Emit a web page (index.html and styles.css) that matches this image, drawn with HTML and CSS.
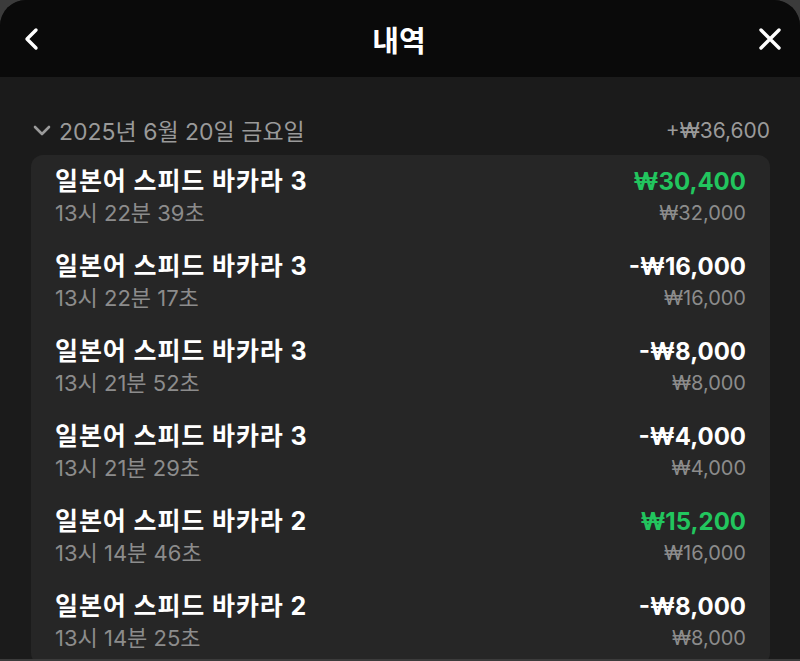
FILE: index.html
```
<!DOCTYPE html>
<html lang="ko">
<head>
    <meta charset="UTF-8">
    <meta name="viewport" content="width=device-width, initial-scale=1.0">
    <title>내역</title>
    <link rel="stylesheet" href="styles.css">
</head>
<body>
    <div class="sheet">
        <div class="topbar">
            <button class="icon-btn" aria-label="back">
                <svg width="20" height="26" viewBox="0 0 20 26"><path d="M15 4 L6 13 L15 22" fill="none" stroke="#fff" stroke-width="3.4" stroke-linecap="round" stroke-linejoin="round"/></svg>
            </button>
            <h1>내역</h1>
            <button class="icon-btn" aria-label="close">
                <svg width="26" height="26" viewBox="0 0 26 26"><path d="M4 4 L22 22 M22 4 L4 22" fill="none" stroke="#fff" stroke-width="3.4" stroke-linecap="round"/></svg>
            </button>
        </div>

        <div class="history">
            <div class="day-head">
                <div class="day-label">
                    <svg width="18" height="12" viewBox="0 0 18 12"><path d="M2 3 L9 10 L16 3" fill="none" stroke="#9a9a9a" stroke-width="2.6" stroke-linecap="round" stroke-linejoin="round"/></svg>
                    <span>2025년 6월 20일 금요일</span>
                </div>
                <span class="day-total">+₩36,600</span>
            </div>

            <div class="card" id="list">
                <div class="row">
                    <div class="info">
                        <div class="game">일본어 스피드 바카라 3</div>
                        <div class="time">13시 22분 39초</div>
                    </div>
                    <div class="amounts">
                        <div class="result win">₩30,400</div>
                        <div class="stake">₩32,000</div>
                    </div>
                </div>
                <div class="row">
                    <div class="info">
                        <div class="game">일본어 스피드 바카라 3</div>
                        <div class="time">13시 22분 17초</div>
                    </div>
                    <div class="amounts">
                        <div class="result">-₩16,000</div>
                        <div class="stake">₩16,000</div>
                    </div>
                </div>
                <div class="row">
                    <div class="info">
                        <div class="game">일본어 스피드 바카라 3</div>
                        <div class="time">13시 21분 52초</div>
                    </div>
                    <div class="amounts">
                        <div class="result">-₩8,000</div>
                        <div class="stake">₩8,000</div>
                    </div>
                </div>
                <div class="row">
                    <div class="info">
                        <div class="game">일본어 스피드 바카라 3</div>
                        <div class="time">13시 21분 29초</div>
                    </div>
                    <div class="amounts">
                        <div class="result">-₩4,000</div>
                        <div class="stake">₩4,000</div>
                    </div>
                </div>
                <div class="row">
                    <div class="info">
                        <div class="game">일본어 스피드 바카라 2</div>
                        <div class="time">13시 14분 46초</div>
                    </div>
                    <div class="amounts">
                        <div class="result win">₩15,200</div>
                        <div class="stake">₩16,000</div>
                    </div>
                </div>
                <div class="row">
                    <div class="info">
                        <div class="game">일본어 스피드 바카라 2</div>
                        <div class="time">13시 14분 25초</div>
                    </div>
                    <div class="amounts">
                        <div class="result">-₩8,000</div>
                        <div class="stake">₩8,000</div>
                    </div>
                </div>
            </div>
        </div>
    </div>
</body>
</html>
```
FILE: styles.css
```
body {
    margin: 0;
    height: 661px;
    overflow: hidden;
    background-color: #3b3b3b;
    font-family: Inter, "Noto Sans CJK KR", sans-serif;
    color: #fff;
}
.sheet {
    height: 659px;
    background-color: #1b1b1b;
    border-radius: 26px 26px 0 0;
    overflow: hidden;
}
.topbar {
    height: 77px;
    background-color: #0a0a0a;
    display: flex;
    justify-content: space-between;
    align-items: center;
    padding: 0 17px 0 21px;
}
.topbar h1 {
    margin: 0;
    font-size: 29px;
    font-weight: 700;
    font-family: "Noto Sans CJK KR", sans-serif;
}
.icon-btn {
    background: none;
    border: none;
    padding: 0;
    display: flex;
    cursor: pointer;
}
.history {
    padding: 38px 30px 0 31px;
}
.day-head {
    display: flex;
    justify-content: space-between;
    align-items: center;
    height: 30px;
    color: #9a9a9a;
    font-size: 21px;
    margin-bottom: 10px;
}
.day-label {
    display: flex;
    align-items: center;
    gap: 8px;
    padding-left: 2px;
}
.day-label span {
    font-size: 23px;
}
.card {
    background-color: #262626;
    border-radius: 12px;
    padding: 0 24px;
}
.row {
    display: flex;
    justify-content: space-between;
    padding: 10px 0 11px;
}
.game {
    font-size: 25px;
    font-weight: 700;
    line-height: 32px;
    letter-spacing: 0.9px;
}
.time {
    font-size: 22px;
    line-height: 32px;
    color: #8c8c8c;
}
.amounts {
    text-align: right;
}
.result {
    font-size: 24px;
    font-weight: 700;
    line-height: 33px;
}
.result.win {
    color: #22c55e;
}
.stake {
    font-size: 20px;
    line-height: 31px;
    color: #8c8c8c;
}
```
